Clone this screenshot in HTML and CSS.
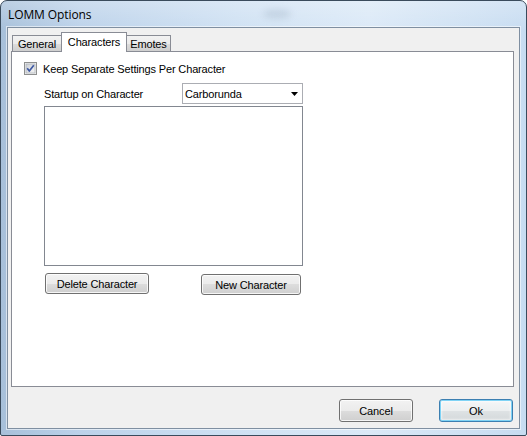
FILE: index.html
```html
<!DOCTYPE html>
<html>
<head>
<meta charset="utf-8">
<title>LOMM Options</title>
<link rel="stylesheet" href="styles.css">
</head>
<body>
<div class="window">
  <div class="titlebar"><span class="title">LOMM Options</span><span class="glare"></span></div>
  <div class="client">
    <div class="tabs">
      <div class="tab tab-general">General</div>
      <div class="tab tab-selected">Characters</div>
      <div class="tab tab-emotes">Emotes</div>
    </div>
    <div class="panel">
      <div class="check-row">
        <span class="checkbox">
          <svg width="13" height="13" viewBox="0 0 13 13">
            <defs>
              <linearGradient id="cbg" x1="0" y1="0" x2="1" y2="1">
                <stop offset="0" stop-color="#cbcfd5"/>
                <stop offset="1" stop-color="#f6f6f6"/>
              </linearGradient>
            </defs>
            <rect x="0.5" y="0.5" width="12" height="12" fill="#f4f4f4" stroke="#8e8f8f"/>
            <rect x="2" y="2" width="9" height="9" fill="url(#cbg)" stroke="#aeb3b9" stroke-width="0.8"/>
            <path d="M3.2 6.2 L5.3 9 L9.8 3.2" fill="none" stroke="#3f59a3" stroke-width="1.7" stroke-linejoin="round"/>
          </svg>
        </span>
        <span class="check-label">Keep Separate Settings Per Character</span>
      </div>
      <div class="settings">
        <div class="startup-row">
          <span class="startup-label">Startup on Character</span>
          <div class="combo">
            <span class="combo-text">Carborunda</span>
            <svg class="combo-arrow" width="7" height="4" viewBox="0 0 7 4"><polygon points="0,0 7,0 3.5,4" fill="#000"/></svg>
          </div>
        </div>
        <div class="listbox"></div>
        <div class="char-buttons">
          <button class="btn btn-delete">Delete Character</button>
          <button class="btn btn-new">New Character</button>
        </div>
      </div>
    </div>
    <div class="dialog-buttons">
      <button class="btn btn-dialog">Cancel</button>
      <button class="btn btn-dialog btn-default">Ok</button>
    </div>
  </div>
</div>
</body>
</html>
```

FILE: styles.css
```css
* { box-sizing: border-box; }
html, body { margin: 0; padding: 0; }
body {
  width: 527px;
  height: 436px;
  overflow: hidden;
  font-family: "Liberation Sans", Arial, sans-serif;
  font-size: 11px;
  letter-spacing: -0.15px;
  color: #000;
  background: #fff;
}
.window {
  width: 527px;
  height: 436px;
  border: 1px solid #3a4b5c;
  border-radius: 7px 7px 2px 2px;
  background:
    linear-gradient(to bottom, rgba(255,255,255,0.25), rgba(255,255,255,0) 30px),
    linear-gradient(to right, #a7c0da 0%, #bcd2ea 15%, #cfe1f3 45%, #dbe9f7 70%, #c7dcf1 100%);
  display: flex;
  flex-direction: column;
  overflow: hidden;
}
.titlebar {
  height: 26px;
  flex: 0 0 26px;
  display: flex;
  align-items: center;
  padding-left: 7px;
  position: relative;
}
.title {
  font-family: "Open Sans", "Noto Sans", sans-serif;
  font-size: 12px;
  color: #000;
  letter-spacing: -0.1px;
}
.glare {
  position: absolute;
  left: 262px;
  top: 8px;
  width: 28px;
  height: 10px;
  border-radius: 50%;
  background: rgba(140, 160, 180, 0.25);
  filter: blur(3px);
}
.client {
  margin: 0 6px 6px 6px;
  flex: 1 1 auto;
  border: 1px solid #7f8fa1;
  box-shadow: 0 0 0 1px rgba(255,255,255,0.55);
  background: #f0f0f0;
  display: flex;
  flex-direction: column;
  padding: 4px 5px 0 3px;
}
.tabs {
  height: 19px;
  flex: 0 0 19px;
  display: flex;
  align-items: flex-end;
  padding-left: 1px;
  position: relative;
  z-index: 2;
}
.tab {
  height: 16px;
  border: 1px solid #898c95;
  border-bottom: none;
  background: linear-gradient(#f2f2f2, #ebebeb 50%, #dddddd 51%, #cfcfcf);
  display: flex;
  align-items: center;
  justify-content: center;
  padding-top: 1px;
}
.tab-general { width: 50px; }
.tab-selected {
  width: 66px;
  height: 20px;
  margin-left: -1px;
  margin-bottom: -1px;
  background: #fff;
  position: relative;
  z-index: 3;
  padding-top: 0;
  padding-bottom: 2px;
}
.tab-emotes { width: 45px; margin-left: -1px; }
.panel {
  height: 336px;
  flex: 0 0 336px;
  border: 1px solid #898c95;
  background: #fff;
  padding: 10px 0 0 0;
  display: flex;
  flex-direction: column;
}
.check-row {
  display: flex;
  align-items: center;
  height: 13px;
  margin-left: 12px;
}
.checkbox { width: 13px; height: 13px; display: block; }
.checkbox svg { display: block; }
.check-label { margin-left: 6px; }
.settings {
  margin-left: 32px;
  margin-top: 8px;
  display: flex;
  flex-direction: column;
}
.startup-row {
  display: flex;
  align-items: center;
  height: 21px;
}
.startup-label { width: 138px; }
.combo {
  width: 121px;
  height: 21px;
  border: 1px solid #abadb3;
  background: #fff;
  display: flex;
  align-items: center;
  padding-left: 2px;
  padding-right: 4px;
  position: relative;
}
.combo-text { flex: 1 1 auto; }
.combo-arrow { display: block; }
.listbox {
  margin-top: 2px;
  width: 259px;
  height: 160px;
  border: 1px solid #828790;
  background: #fff;
}
.char-buttons {
  display: flex;
  align-items: flex-start;
  margin-top: 7px;
}
.btn {
  font-family: "Liberation Sans", Arial, sans-serif;
  font-size: 11px;
  letter-spacing: -0.15px;
  color: #000;
  height: 21px;
  border: 1px solid #707070;
  border-radius: 3px;
  background: linear-gradient(#f2f2f2 0%, #ebebeb 50%, #dddddd 50%, #cfcfcf 100%);
  box-shadow: inset 0 0 0 1px rgba(255,255,255,0.8);
  padding: 0;
  margin: 0;
}
.btn-delete { width: 104px; margin-left: 1px; }
.btn-new { width: 100px; margin-left: 52px; margin-top: 1px; }
.dialog-buttons {
  display: flex;
  justify-content: flex-end;
  margin-top: 12px;
  padding-right: 1px;
}
.btn-dialog { width: 74px; height: 23px; }
.btn-dialog + .btn-dialog { margin-left: 26px; }
.btn-default {
  border-color: #3c7fb1;
  box-shadow: inset 0 0 0 1px #7fd3f5, inset 0 0 2px 2px rgba(255,255,255,0.6);
  background: linear-gradient(#f4f6f7 0%, #eceff0 50%, #dfe3e5 50%, #d3d8da 100%);
}
```
